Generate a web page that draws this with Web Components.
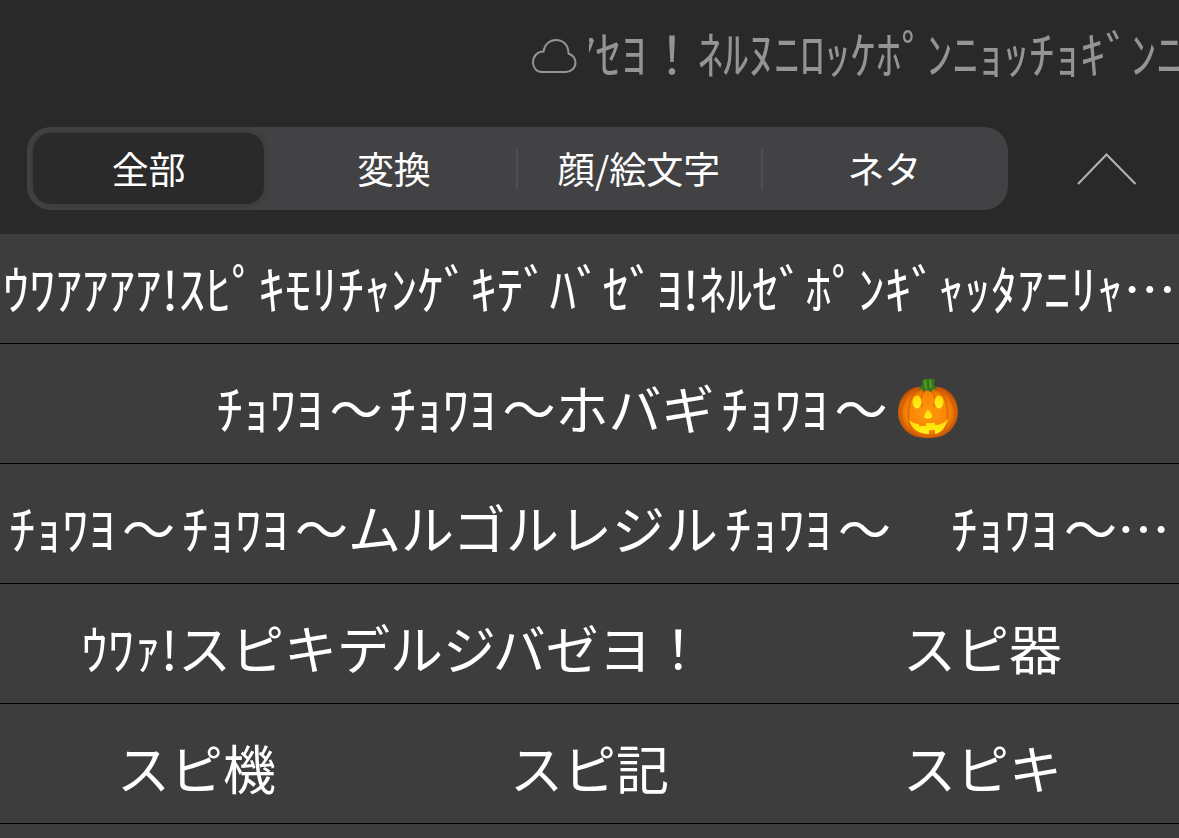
<!DOCTYPE html>
<html lang="ja">
<head>
<meta charset="utf-8">
<meta name="viewport" content="width=device-width, initial-scale=1">
<title>変換候補</title>
<style>
html, body { height: 100%; margin: 0; background: #292929; }
body { font-family: "Noto Sans CJK JP", sans-serif; color: #fff; overflow: hidden; }
</style>
</head>
<body>
<candidate-panel></candidate-panel>
<script>
const define = (name, html) => customElements.define(name, class extends HTMLElement {
  constructor() {
    super();
    this.attachShadow({ mode: "open" }).innerHTML = html;
  }
});

define("live-prediction", `
<style>
:host { display: flex; align-items: center; justify-content: flex-end; height: 104px; color: #949494; }
svg { flex: none; width: 46px; height: 38px; margin-top: 6px; }
.text { flex: none; width: 590px; margin-left: 12px; overflow: hidden; display: flex; justify-content: flex-end; white-space: nowrap; font-size: 51px; line-height: 80px; }
.text span { margin-right: -3px; }
</style>
<svg viewBox="0 0 46 38" fill="none" stroke="currentColor" stroke-width="2" stroke-linejoin="round" aria-hidden="true">
<path d="M11 36C5.500 36 2 31.500 2 26.500C2 20.500 6 15.500 12.500 15.500C13.500 8.500 18.500 4 25 4C32 4 37.500 9 37.500 17.500C41.500 19 44.500 22.500 44.500 26.500C44.500 32 40 36 35 36Z"/>
</svg>
<div class="text"><span><slot></slot></span></div>`);

define("segment-tab", `
<style>
:host { display: flex; position: relative; min-width: 0; }
button { flex: 1; margin: 6px 8px 6px 6px; padding: 0; border: 0; border-radius: 18px; background: none; color: #fff; font: 37px/71px "Noto Sans CJK JP", sans-serif; white-space: nowrap; }
:host([selected]) button { background: #2a2a2a; box-shadow: 0 0 6px #0003; }
:host([divided])::after { content: ""; position: absolute; right: 0; top: 22px; bottom: 20px; width: 2px; background: #4f4f52; }
</style>
<button type="button"><slot></slot></button>`);

define("segment-bar", `
<style>
:host { display: grid; grid-template-columns: repeat(4, 1fr); flex: 1; height: 83px; border-radius: 24px; background: #424244; }
</style>
<slot></slot>`);

define("collapse-button", `
<style>
:host { display: flex; }
button { display: flex; padding: 10px; border: 0; background: none; color: #b4b4b4; }
svg { width: 60px; height: 34px; }
</style>
<button type="button" aria-label="閉じる"><svg viewBox="0 0 60 34" fill="none" stroke="currentColor" stroke-width="2"><path d="M1 32L29.500 2.500L58.500 32"/></svg></button>`);

// A run of half-width kana, set off from the full-width text around it.
define("kana-run", `<style>:host { display: inline; margin: 0 7px; } :host(:first-child) { margin-left: 0; }</style><slot></slot>`);

define("pumpkin-icon", `<style>
:host { display: inline-block; width: 66px; height: 64px; margin: 0 2px 0 7px; vertical-align: -10px; line-height: 0; }
svg { display: block; width: 66px; height: 64px; }
</style>
<svg viewBox="0 0 66 64" role="img" aria-label="かぼちゃ">
<defs>
<radialGradient id="skin" cx=".5" cy=".5" r=".55"><stop offset="0" stop-color="#ff9a0c"/><stop offset=".68" stop-color="#f78306"/><stop offset="1" stop-color="#b94505"/></radialGradient>
<linearGradient id="glow" x2="0" y2="1"><stop offset="0" stop-color="#ffd800"/><stop offset="1" stop-color="#fff21c"/></linearGradient>
</defs>
<path fill="url(#skin)" d="M33 12C43 9 52 12 58 20C65 30 65 44 56 54C50 60 43 62 33 62C23 62 16 60 10 54C1 44 1 30 8 20C14 12 23 9 33 12Z"/>
<g fill="none" stroke="#cd5c08" stroke-width="1.500" opacity=".65"><path d="M25 13C12 20 9 43 20 60M41 13C54 20 57 43 46 60M18 14C5 24 3 42 11 53M48 14C61 24 63 42 55 53M30 14C25 20 25 26 27 31M36 14C41 20 41 26 39 31"/></g>
<path fill="#35791b" d="M23 14C26 11 28 9 27 5C30 2 37 2 40 4C38 9 40 11 43 14L38 13L36 16L32 14L28 16L27 13Z"/>
<path fill="none" stroke="#65a52e" stroke-width="1.500" d="M30 4L31 13M35 4L36 12"/>
<g fill="url(#glow)">
<ellipse cx="22" cy="26" rx="4.500" ry="6.500"/><ellipse cx="44" cy="26" rx="4.500" ry="6.500"/>
<path d="M33 34C35 34 37 38 37 41C35 43 31 43 29 41C30 38 31 34 33 34Z"/>
<path d="M14 44C18 47 21 48 24 48V50L31 50V47H40V49C45 49 49 47 53 43C51 51 46 57 40 58V54H34V58C24 58 17 53 14 44Z"/>
</g>
</svg>`);

define("candidate-item", `
<style>
:host { display: flex; min-width: 0; }
:host([span="2"]) { grid-column: span 2; }
:host([span="3"]) { grid-column: span 3; }
button { flex: 1; min-width: 0; padding: 8px 0 0; border: 0; background: none; color: #fff; font: 53px/111px "Noto Sans CJK JP", sans-serif; white-space: nowrap; }
</style>
<button type="button"><slot></slot></button>`);

define("candidate-row", `
<style>
:host { display: grid; grid-template-columns: repeat(3, 1fr); height: 119px; flex: none; align-content: end; border-bottom: 1px solid #000; background: #3d3d3d; overflow: hidden; }
:host([partial]) { height: 109px; }
:host([rest]) { flex: 1; border: 0; height: auto; }
</style>
<slot></slot>`);

define("candidate-panel", `
<style>
:host { display: flex; flex-direction: column; height: 100vh; }
header { flex: none; height: 234px; }
nav { display: flex; align-items: center; gap: 59px; padding: 23px 32px 0 27px; }
main { flex: 1; min-height: 0; display: flex; flex-direction: column; overflow: hidden; }
</style>
<header>
<live-prediction>ｱｾﾖ！ﾈﾙﾇﾆﾛｯｹﾎﾟﾝﾆｮｯﾁｮｷﾞﾝﾆ</live-prediction>
<nav>
<segment-bar>
<segment-tab selected>全部</segment-tab>
<segment-tab divided>変換</segment-tab>
<segment-tab divided>顔/絵文字</segment-tab>
<segment-tab>ネタ</segment-tab>
</segment-bar>
<collapse-button></collapse-button>
</nav>
</header>
<main>
<candidate-row partial><candidate-item span="3">ｳﾜｱｱｱｱ!ｽﾋﾟｷﾓﾘﾁｬﾝｹﾞｷﾃﾞﾊﾞｾﾞﾖ!ﾈﾙｾﾞﾎﾟﾝｷﾞｬｯﾀｱﾆﾘｬ…</candidate-item></candidate-row>
<candidate-row><candidate-item span="3"><kana-run>ﾁｮﾜﾖ</kana-run>～<kana-run>ﾁｮﾜﾖ</kana-run>～ホバギ<kana-run>ﾁｮﾜﾖ</kana-run>～<pumpkin-icon></pumpkin-icon></candidate-item></candidate-row>
<candidate-row><candidate-item span="3"><kana-run>ﾁｮﾜﾖ</kana-run>～<kana-run>ﾁｮﾜﾖ</kana-run>～ムルゴルレジル<kana-run>ﾁｮﾜﾖ</kana-run>～　<kana-run>ﾁｮﾜﾖ</kana-run>～…</candidate-item></candidate-row>
<candidate-row><candidate-item span="2">ｳﾜｧ!スピキデルジバゼヨ！</candidate-item><candidate-item>スピ器</candidate-item></candidate-row>
<candidate-row><candidate-item>スピ機</candidate-item><candidate-item>スピ記</candidate-item><candidate-item>スピキ</candidate-item></candidate-row>
<candidate-row rest></candidate-row>
</main>`);
</script>
</body>
</html>
